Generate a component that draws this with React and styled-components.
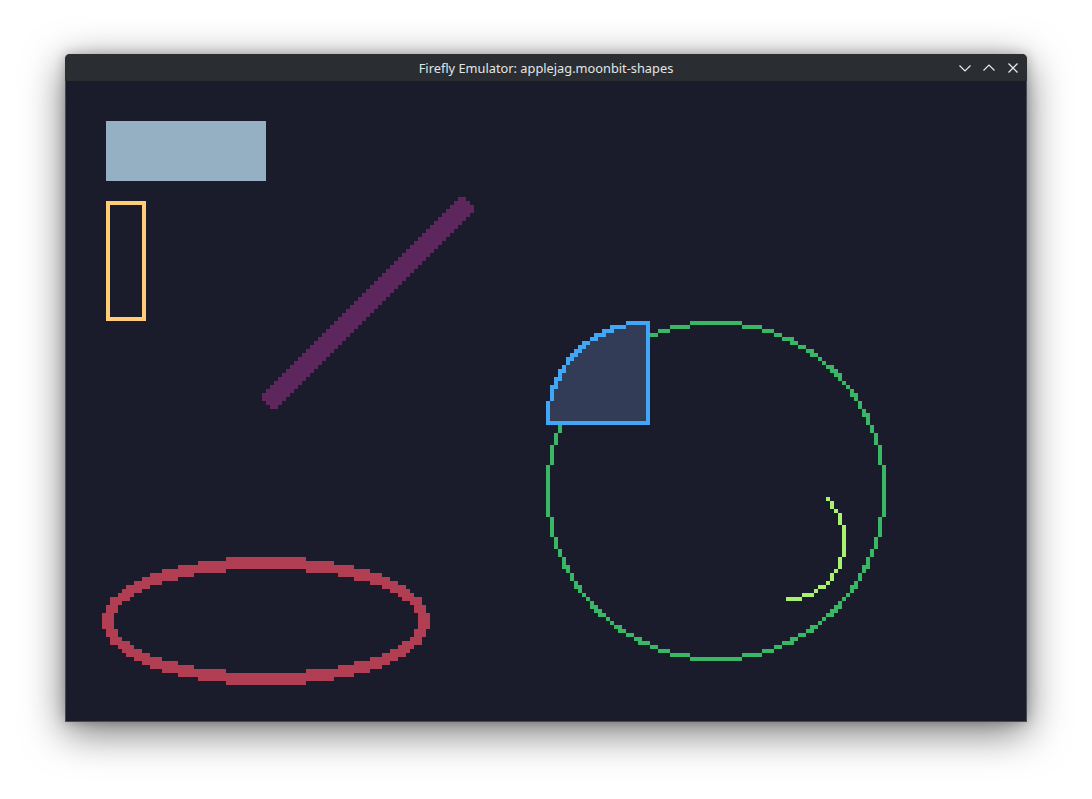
import React, { useMemo } from 'react'
import styled, { createGlobalStyle } from 'styled-components'

const GlobalStyle = createGlobalStyle`
  html, body {
    margin: 0;
    padding: 0;
    background: #ffffff;
  }
  #root {
    width: 1092px;
    height: 799px;
  }
`;

const Screen = styled.div`
  width: 1092px;
  height: 799px;
  box-sizing: border-box;
  padding: 54px 0 0 65px;
  background: #ffffff;
  overflow: hidden;
`;

const Window = styled.div`
  width: 962px;
  display: flex;
  flex-direction: column;
  border-radius: 5px 5px 0 0;
  background: #2a2e32;
  box-shadow: 0 10px 40px rgba(0, 0, 0, 0.55), 0 0 12px rgba(0, 0, 0, 0.25);
  overflow: hidden;
`;

const TitleBar = styled.div`
  position: relative;
  height: 27px;
  display: flex;
  align-items: center;
  justify-content: center;
  background: #2a2e32;
`;

const Title = styled.div`
  font-family: "Noto Sans", "Open Sans", sans-serif;
  font-size: 12.8px;
  color: #e3e5e7;
`;

const Controls = styled.div`
  position: absolute;
  right: 8px;
  top: 0;
  height: 27px;
  display: flex;
  align-items: center;
  gap: 12px;
`;

const Control = styled.svg`
  width: 12px;
  height: 12px;
  display: block;
`;

const Frame = styled.div`
  padding: 0 1px 1px 1px;
  background: #464b51;
`;

const Canvas = styled.svg`
  display: block;
  width: 960px;
  height: 640px;
  background: #1a1c2b;
`;

const PAL = {
  purple: '#5d275d',
  red: '#b13e53',
  yellow: '#ffcd75',
  lightGreen: '#a7f070',
  green: '#38b764',
  lightBlue: '#41a6f6',
  lightGray: '#94b0c2',
  darkGray: '#333c57',
};

const W = 240;
const H = 160;

function buildPixels() {
  const grid = new Array(W * H).fill(null);
  const set = (x, y, c) => {
    if (x >= 0 && x < W && y >= 0 && y < H) grid[y * W + x] = c;
  };

  // filled rect
  for (let y = 10; y < 25; y++) for (let x = 10; x < 50; x++) set(x, y, PAL.lightGray);

  // outlined rect
  for (let x = 10; x < 20; x++) {
    set(x, 30, PAL.yellow);
    set(x, 59, PAL.yellow);
  }
  for (let y = 30; y < 60; y++) {
    set(10, y, PAL.yellow);
    set(19, y, PAL.yellow);
  }

  // thick line (50,80) -> (100,30)
  for (let y = 0; y < H; y++) {
    for (let x = 0; x < W; x++) {
      const dx = x - 50;
      const dy = y - 80;
      const s = dx + dy;
      const d = dx - dy;
      if (Math.abs(s) <= 3 && d >= 0 && d <= 100) set(x, y, PAL.purple);
    }
  }

  // circle, doubled coordinates like embedded-graphics
  const inCircle = (x, y, tx, ty, dia) => {
    const dx = 2 * x - (2 * tx + dia - 1);
    const dy = 2 * y - (2 * ty + dia - 1);
    return dx * dx + dy * dy < dia * dia;
  };
  for (let y = 55; y < 150; y++) {
    for (let x = 115; x < 210; x++) {
      if (inCircle(x, y, 120, 60, 85) && !inCircle(x, y, 121, 61, 83)) set(x, y, PAL.green);
    }
  }

  // sector, top-left quarter
  for (let y = 60; y <= 85; y++) {
    for (let x = 120; x <= 145; x++) {
      const fx = x - 145;
      const fy = y - 85;
      const r2 = fx * fx + fy * fy;
      if (r2 < 660) {
        if (x === 145 || y === 85 || r2 >= 603) set(x, y, PAL.lightBlue);
        else set(x, y, PAL.darkGray);
      }
    }
  }

  // arc
  for (let y = 95; y < 135; y++) {
    for (let x = 160; x < 200; x++) {
      const fx = x + 0.5 - 180;
      const fy = y + 0.5 - 115;
      const r2 = fx * fx + fy * fy;
      if (r2 < 225 && r2 >= 201.5) {
        const a = (Math.atan2(fy, fx) * 180) / Math.PI;
        if (a >= -45.5 && a <= 90) set(x, y, PAL.lightGreen);
      }
    }
  }

  // ellipse, stroke 3
  const inEllipse = (x, y, tx, ty, w, h) => {
    const dx = 2 * x - (2 * tx + w - 1);
    const dy = 2 * y - (2 * ty + h - 1);
    return dx * dx * h * h + dy * dy * w * w < w * w * h * h;
  };
  for (let y = 115; y < 155; y++) {
    for (let x = 5; x < 95; x++) {
      if (inEllipse(x, y, 9, 119, 82, 32) && !inEllipse(x, y, 12, 122, 76, 26)) set(x, y, PAL.red);
    }
  }

  // merge into horizontal runs
  const runs = [];
  for (let y = 0; y < H; y++) {
    let x = 0;
    while (x < W) {
      const c = grid[y * W + x];
      if (!c) {
        x++;
        continue;
      }
      let end = x;
      while (end + 1 < W && grid[y * W + end + 1] === c) end++;
      runs.push({ x, y, w: end - x + 1, c });
      x = end + 1;
    }
  }
  return runs;
}

const ChevronDown = () => (
  <Control viewBox="0 0 12 12">
    <path d="M0.5 3.5 L6 9 L11.5 3.5" fill="none" stroke="#e6e8ea" strokeWidth="1.2" />
  </Control>
);

const ChevronUp = () => (
  <Control viewBox="0 0 12 12">
    <path d="M0.5 8.5 L6 3 L11.5 8.5" fill="none" stroke="#e6e8ea" strokeWidth="1.2" />
  </Control>
);

const Close = () => (
  <Control viewBox="0 0 12 12">
    <path d="M1.5 1.5 L10.5 10.5 M10.5 1.5 L1.5 10.5" fill="none" stroke="#e6e8ea" strokeWidth="1.3" />
  </Control>
);

const App = () => {
  const runs = useMemo(() => buildPixels(), []);

  return (
    <>
      <GlobalStyle />
      <Screen>
        <Window>
          <TitleBar>
            <Title>Firefly Emulator: applejag.moonbit-shapes</Title>
            <Controls>
              <ChevronDown />
              <ChevronUp />
              <Close />
            </Controls>
          </TitleBar>
          <Frame>
            <Canvas viewBox="0 0 240 160" shapeRendering="crispEdges">
              {runs.map((r, i) => (
                <rect key={i} x={r.x} y={r.y} width={r.w} height={1} fill={r.c} />
              ))}
            </Canvas>
          </Frame>
        </Window>
      </Screen>
    </>
  );
};

export default App;
